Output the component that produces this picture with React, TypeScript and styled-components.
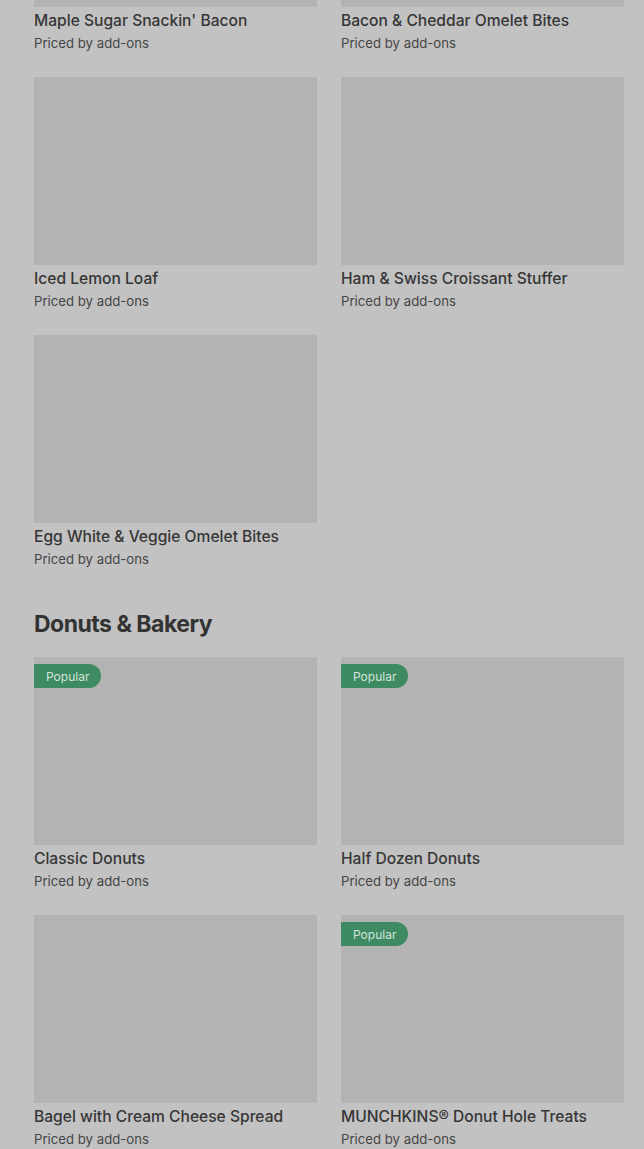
import React from "react";
import styled, { createGlobalStyle } from "styled-components";

const Global = createGlobalStyle`
  html, body { margin: 0; padding: 0; background: #c2c2c2; }
  body { font-family: Inter, "Noto Sans", Roboto, sans-serif; color: #333; overflow: hidden; }
`;

const Page = styled.div`
  padding: 0 20px 0 34px;
  margin-top: -181px;
`;

const Section = styled.section`
  display: flex;
  flex-direction: column;
`;

const Heading = styled.h2`
  margin: 39px 0 17px;
  font-size: 23px;
  line-height: 32px;
  font-weight: 700;
  letter-spacing: -0.5px;
  color: #333;
`;

const Grid = styled.div`
  display: grid;
  grid-template-columns: 283px 283px;
  column-gap: 24px;
  row-gap: 24px;
`;

const Card = styled.div`
  display: flex;
  flex-direction: column;
`;

const Thumb = styled.div`
  position: relative;
  height: 188px;
  background: #b3b3b3;
`;

const Badge = styled.span`
  position: absolute;
  top: 7px;
  left: 0;
  height: 24px;
  padding: 0 12px;
  display: flex;
  align-items: center;
  background: #3d8a63;
  color: #d4e4da;
  font-size: 12px;
  border-radius: 0 12px 12px 0;
`;

const Title = styled.div`
  margin-top: 4px;
  font-size: 15.6px;
  line-height: 20px;
  font-weight: 500;
  color: #363636;
  white-space: nowrap;
`;

const Sub = styled.div`
  margin-top: 2px;
  font-size: 13.2px;
  line-height: 20px;
  color: #454545;
`;

type Item = { name: string; popular?: boolean };

const first: Item[] = [
  { name: "Maple Sugar Snackin' Bacon" },
  { name: "Bacon & Cheddar Omelet Bites" },
  { name: "Iced Lemon Loaf" },
  { name: "Ham & Swiss Croissant Stuffer" },
  { name: "Egg White & Veggie Omelet Bites" },
];

const donuts: Item[] = [
  { name: "Classic Donuts", popular: true },
  { name: "Half Dozen Donuts", popular: true },
  { name: "Bagel with Cream Cheese Spread" },
  { name: "MUNCHKINS® Donut Hole Treats", popular: true },
];

const ItemCard = ({ item }: { item: Item }) => (
  <Card>
    <Thumb>{item.popular && <Badge>Popular</Badge>}</Thumb>
    <Title>{item.name}</Title>
    <Sub>Priced by add-ons</Sub>
  </Card>
);

export default function App() {
  return (
    <>
      <Global />
      <Page>
        <Section>
          <Grid>
            {first.map((i) => (
              <ItemCard key={i.name} item={i} />
            ))}
          </Grid>
        </Section>
        <Section>
          <Heading>Donuts &amp; Bakery</Heading>
          <Grid>
            {donuts.map((i) => (
              <ItemCard key={i.name} item={i} />
            ))}
          </Grid>
        </Section>
      </Page>
    </>
  );
}
